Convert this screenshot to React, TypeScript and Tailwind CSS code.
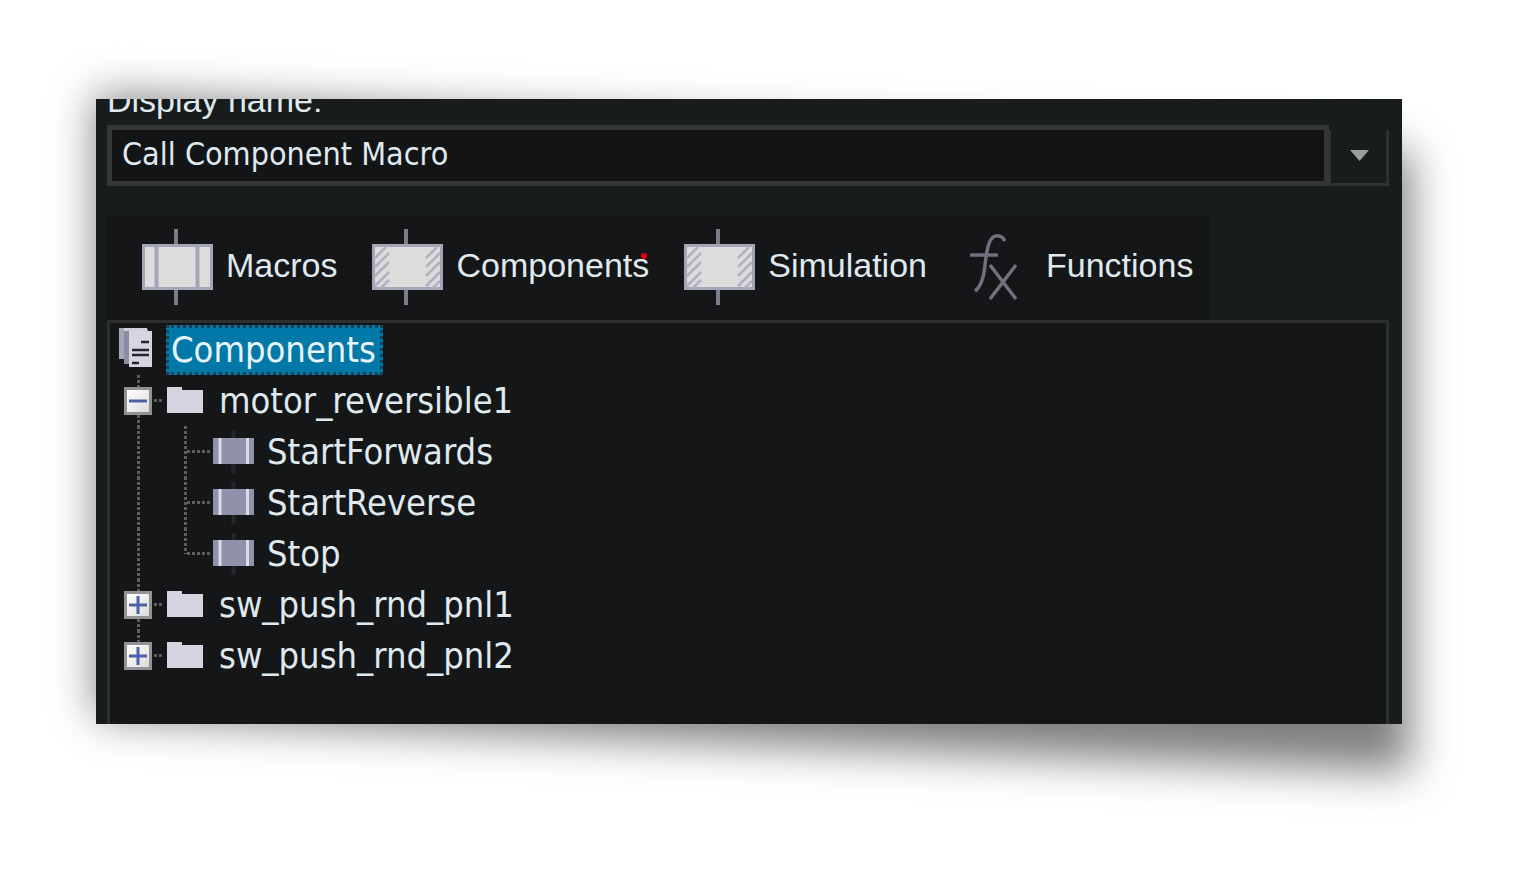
import { useState } from 'react'
import type { ReactNode } from 'react'

const dotsX = 'h-[3px] bg-[repeating-linear-gradient(to_right,#5c5d5f_0_3px,transparent_3px_5px)]'
const dotsY = 'w-[3px] bg-[repeating-linear-gradient(to_bottom,#5c5d5f_0_3px,transparent_3px_5px)]'

function MacroIcon() {
  return (
    <svg width="71" height="76" viewBox="0 0 71 76" aria-hidden="true">
      <path d="M34 0v76" stroke="#7c7c8c" strokeWidth="4" />
      <rect x="1.5" y="16.5" width="68" height="43" fill="#dcdcdc" stroke="#a5a5b9" strokeWidth="3" />
      <path d="M14.5 17v42M55.5 17v42" stroke="#a5a5b9" strokeWidth="4" />
    </svg>
  )
}

function ComponentIcon() {
  return (
    <svg width="71" height="76" viewBox="0 0 71 76" aria-hidden="true">
      <path d="M34 0v76" stroke="#7c7c8c" strokeWidth="4" />
      <rect x="1.5" y="16.5" width="68" height="43" fill="#dcdcdc" stroke="#a5a5b9" strokeWidth="3" />
      <path
        d="M3 29L14 18M3 38L17 24M3 47L17 33M3 57L17 43M9 59L17 51M54 29L65 18M54 38L68 24M54 47L68 33M54 57L68 43M61 59L68 52"
        stroke="#b0b0c0"
        strokeWidth="2.5"
      />
    </svg>
  )
}

function FunctionIcon() {
  return (
    <svg width="71" height="76" viewBox="0 0 71 76" fill="none" stroke="#70707e" strokeWidth="3.5" aria-hidden="true">
      <path d="M43 12C39 5 32 5 28 12C25 18 24 28 23 36C22 46 20 57 13 62" />
      <path d="M8 26H36" />
      <path d="M28 36L54 70M54 36L28 70" />
    </svg>
  )
}

function PagesIcon() {
  return (
    <svg width="38" height="42" viewBox="0 0 38 42" aria-hidden="true">
      <path d="M0 0H28V31H0Z" fill="#a6a6ba" />
      <path d="M5 1H29V36H5Z" fill="#8b8ba2" />
      <path d="M5 0H28V3H5Z" fill="#d0d0dd" />
      <path d="M10 3H33V39H10Z" fill="#d6d6e2" />
      <path d="M22 14H30M13 22H30M13 27H30M13 35H20" stroke="#242529" strokeWidth="2.5" />
    </svg>
  )
}

function FolderIcon() {
  return (
    <svg width="38" height="28" viewBox="0 0 38 28" aria-hidden="true">
      <path d="M0 0H15V3H36V26H0Z" fill="#d5d4e0" />
    </svg>
  )
}

function CallIcon() {
  return (
    <svg width="42" height="42" viewBox="0 0 42 42" aria-hidden="true">
      <path d="M20.5 0V42" stroke="#25262a" strokeWidth="4" />
      <rect x="0" y="7" width="41" height="26" fill="#9191ab" />
      <path d="M7 7V33M34.5 7V33" stroke="#dcdce8" strokeWidth="3" />
    </svg>
  )
}

const tabs = [
  { label: 'Macros', icon: <MacroIcon /> },
  { label: 'Components', icon: <ComponentIcon />, marked: true },
  { label: 'Simulation', icon: <ComponentIcon /> },
  { label: 'Functions', icon: <FunctionIcon /> },
]

const components = [
  { name: 'motor_reversible1', macros: ['StartForwards', 'StartReverse', 'Stop'] },
  { name: 'sw_push_rnd_pnl1', macros: ['Start', 'Stop'] },
  { name: 'sw_push_rnd_pnl2', macros: ['Start', 'Stop'] },
]

function Cell({ children }: { children?: ReactNode }) {
  return <div className="flex h-full w-12 shrink-0 items-center justify-center">{children}</div>
}

function Leaf({ name, last, lastParent }: { name: string; last: boolean; lastParent: boolean }) {
  return (
    <li role="treeitem" className="flex h-[51px] items-center">
      <Cell>{!lastParent && <span className={`${dotsY} h-full`} />}</Cell>
      <div className="flex h-full w-12 shrink-0 items-center pl-[22px]">
        <span className={`${dotsY} ${last ? 'h-1/2 self-start' : 'h-full'}`} />
        <span className={`${dotsX} flex-1`} />
      </div>
      <Cell>
        <CallIcon />
      </Cell>
      <span className="pl-[9px]">{name}</span>
    </li>
  )
}

function Branch({ name, macros, last }: { name: string; macros: string[]; last: boolean }) {
  const [open, setOpen] = useState(name === 'motor_reversible1')

  return (
    <li role="treeitem" aria-expanded={open}>
      <div className="flex h-[51px] items-center">
        <div className="flex h-full w-12 shrink-0 items-center pl-[10px]">
          <div className="flex h-full w-7 flex-col items-center">
            <span className={`${dotsY} flex-1`} />
            <button
              type="button"
              aria-label={open ? `Collapse ${name}` : `Expand ${name}`}
              onClick={() => setOpen(!open)}
              className="flex size-7 items-center justify-center border-[3px] border-[#929292] bg-linear-to-br from-white to-[#dcdcdc]"
            >
              <svg width="18" height="18" viewBox="0 0 18 18" stroke="#4a62a8" strokeWidth="3" aria-hidden="true">
                <path d={open ? 'M0 9H18' : 'M0 9H18M9 0V18'} />
              </svg>
            </button>
            <span className={last ? 'flex-1' : `${dotsY} flex-1`} />
          </div>
          <span className={`${dotsX} ml-0.5 w-2`} />
        </div>
        <Cell>
          <FolderIcon />
        </Cell>
        <span className="pl-[9px]">{name}</span>
      </div>
      {open && (
        <ul role="group">
          {macros.map((macro, i) => (
            <Leaf key={macro} name={macro} last={i === macros.length - 1} lastParent={last} />
          ))}
        </ul>
      )}
    </li>
  )
}

export default function App() {
  const [name, setName] = useState('Call Component Macro')

  return (
    <div className="min-h-screen overflow-hidden bg-white pt-[99px] pr-[111px] pb-[150px] pl-24 font-['Liberation_Sans',sans-serif] text-[#dfe9ee]">
      <div className="relative">
        {/* slanted drop shadow */}
        <div className="absolute top-6 -right-2 -bottom-5 left-0 skew-y-[2.4deg] bg-black/50 blur-[22px]" />
        <main className="relative overflow-hidden bg-[#181c1d] pr-[13px] pl-[11px]">
          <label htmlFor="display-name" className="-mt-[19px] mb-[5px] block text-[34px] leading-10">
            Display name:
          </label>
          <div className="flex h-[61px]">
            <input
              id="display-name"
              type="text"
              value={name}
              onChange={(e) => setName(e.target.value)}
              className="min-w-0 flex-1 border-[5px] border-[#343637] bg-[#131416] px-[10px] pb-1 font-['DejaVu_Sans_Condensed','Noto_Sans',sans-serif] text-[32px] outline-none"
            />
            <button
              type="button"
              aria-label="Icon options"
              className="mt-[5px] flex w-[60px] items-center justify-center border-r-[3px] border-b-[3px] border-l-2 border-[#2f3233] pb-0.5 pl-0.5"
            >
              <svg width="19" height="11" viewBox="0 0 19 11" aria-hidden="true">
                <path d="M0 0H19L9.5 11Z" fill="#9c9d9f" />
              </svg>
            </button>
          </div>

          <nav className="mt-[29px] flex h-[105px] w-fit items-center gap-[35px] bg-[#151618] pr-[17px] pb-0.5 pl-[35px]">
            {tabs.map((tab) => (
              <button key={tab.label} type="button" className="flex items-center gap-[13px] text-[34px] leading-10">
                {tab.icon}
                <span className="relative pb-1">
                  {tab.label}
                  {tab.marked && <span className="absolute top-2 right-0.5 size-1.5 rounded-full bg-[#e0000c]" />}
                </span>
              </button>
            ))}
          </nav>

          <ul
            role="tree"
            aria-label="Components"
            className="border-x-[3px] border-t-[3px] border-[#2c2e30] bg-[#151618] pt-px pb-[43px] pl-1 font-['DejaVu_Sans_Condensed','Noto_Sans',sans-serif] text-[36px] leading-[50px]"
          >
            <li role="treeitem" aria-selected="true" className="flex h-[51px] items-center">
              <div className="flex h-full w-12 shrink-0 items-start justify-center pt-1">
                <PagesIcon />
              </div>
              <span className="ml-1 border-[3px] border-dotted border-[#15425a] bg-[#0078a8] pr-1 pl-0.5 leading-[44px] text-[#e8f4fa]">
                Components
              </span>
            </li>
            {components.map((c, i) => (
              <Branch key={c.name} name={c.name} macros={c.macros} last={i === components.length - 1} />
            ))}
          </ul>
        </main>
      </div>
    </div>
  )
}
